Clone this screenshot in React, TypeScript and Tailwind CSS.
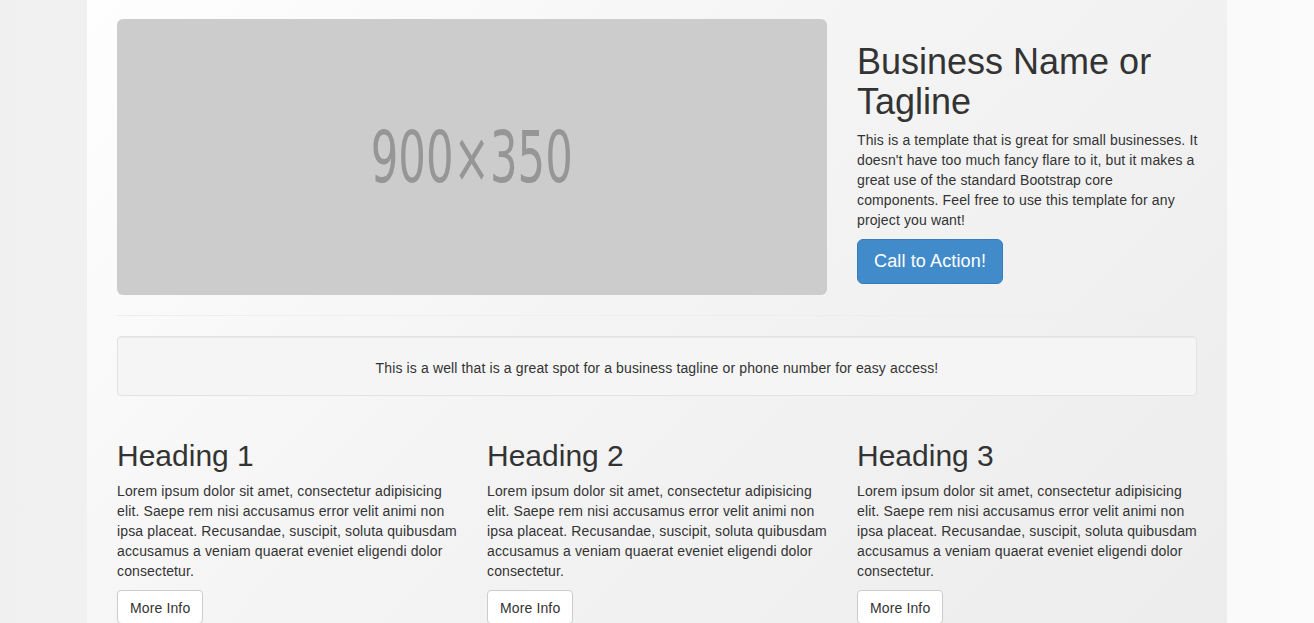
export default function App() {
  const columns = [
    { title: 'Heading 1' },
    { title: 'Heading 2' },
    { title: 'Heading 3' },
  ]
  const lorem =
    'Lorem ipsum dolor sit amet, consectetur adipisicing elit. Saepe rem nisi accusamus error velit animi non ipsa placeat. Recusandae, suscipit, soluta quibusdam accusamus a veniam quaerat eveniet eligendi dolor consectetur.'

  return (
    <div className="min-h-screen bg-[linear-gradient(to_right,#f0f0f0_0%,#f3f3f3_50%,#fbfbfb_100%)] font-['Liberation_Sans',Arial,sans-serif] text-[14px] leading-[20px] tracking-[0.13px] text-[#333]">
      <div className="mx-auto w-[1140px] bg-[linear-gradient(135deg,#fefefe_0%,#f4f4f4_45%,#ececec_100%)] px-[30px] pt-[19px] pb-[30px]">
        <div className="flex gap-[30px]">
          <div className="flex h-[276px] w-[710px] shrink-0 items-center justify-center overflow-hidden rounded-[6px] bg-[#cccccc]">
            <span className="inline-block scale-x-[0.67] font-['Liberation_Sans_Narrow','DejaVu_Sans_Condensed',sans-serif] text-[72px] leading-none tracking-normal text-[#969696]">
              900×350
            </span>
          </div>
          <div className="w-[340px]">
            <h1 className="mt-[23px] mb-[9px] text-[36px] leading-[39.6px] font-normal tracking-normal">Business Name or Tagline</h1>
            <p className="mb-[8px] mr-[-4px]">
              This is a template that is great for small businesses. It doesn't have too much fancy flare to it, but it makes a great use of the standard Bootstrap core
              <br />
              components. Feel free to use this template for any project you want!
            </p>
            <button className="mt-[1px] rounded-[6px] border border-[#357ebd] bg-[#428bca] px-[16px] py-[10px] text-[18px] leading-[23px] text-white">
              Call to Action!
            </button>
          </div>
        </div>

        <hr className="my-[20px] border-t border-[#eeeeee]" />

        <div className="mb-[20px] rounded-[4px] border border-[#e3e3e3] bg-[#f5f5f5] px-[19px] pt-[21px] pb-[17px] text-center shadow-[inset_0_1px_1px_rgba(0,0,0,0.05)]">
          This is a well that is a great spot for a business tagline or phone number for easy access!
        </div>

        <div className="grid grid-cols-3 gap-[30px]">
          {columns.map((col) => (
            <div key={col.title}>
              <h2 className="mt-[23px] mb-[9px] text-[30px] leading-[33px] font-normal tracking-normal">{col.title}</h2>
              <p className="mb-[9px]">{lorem}</p>
              <button className="rounded-[4px] border border-[#cccccc] bg-white px-[12px] pt-[7px] pb-[5px] text-[14px] leading-[20px] text-[#333]">
                More Info
              </button>
            </div>
          ))}
        </div>
      </div>
    </div>
  )
}
